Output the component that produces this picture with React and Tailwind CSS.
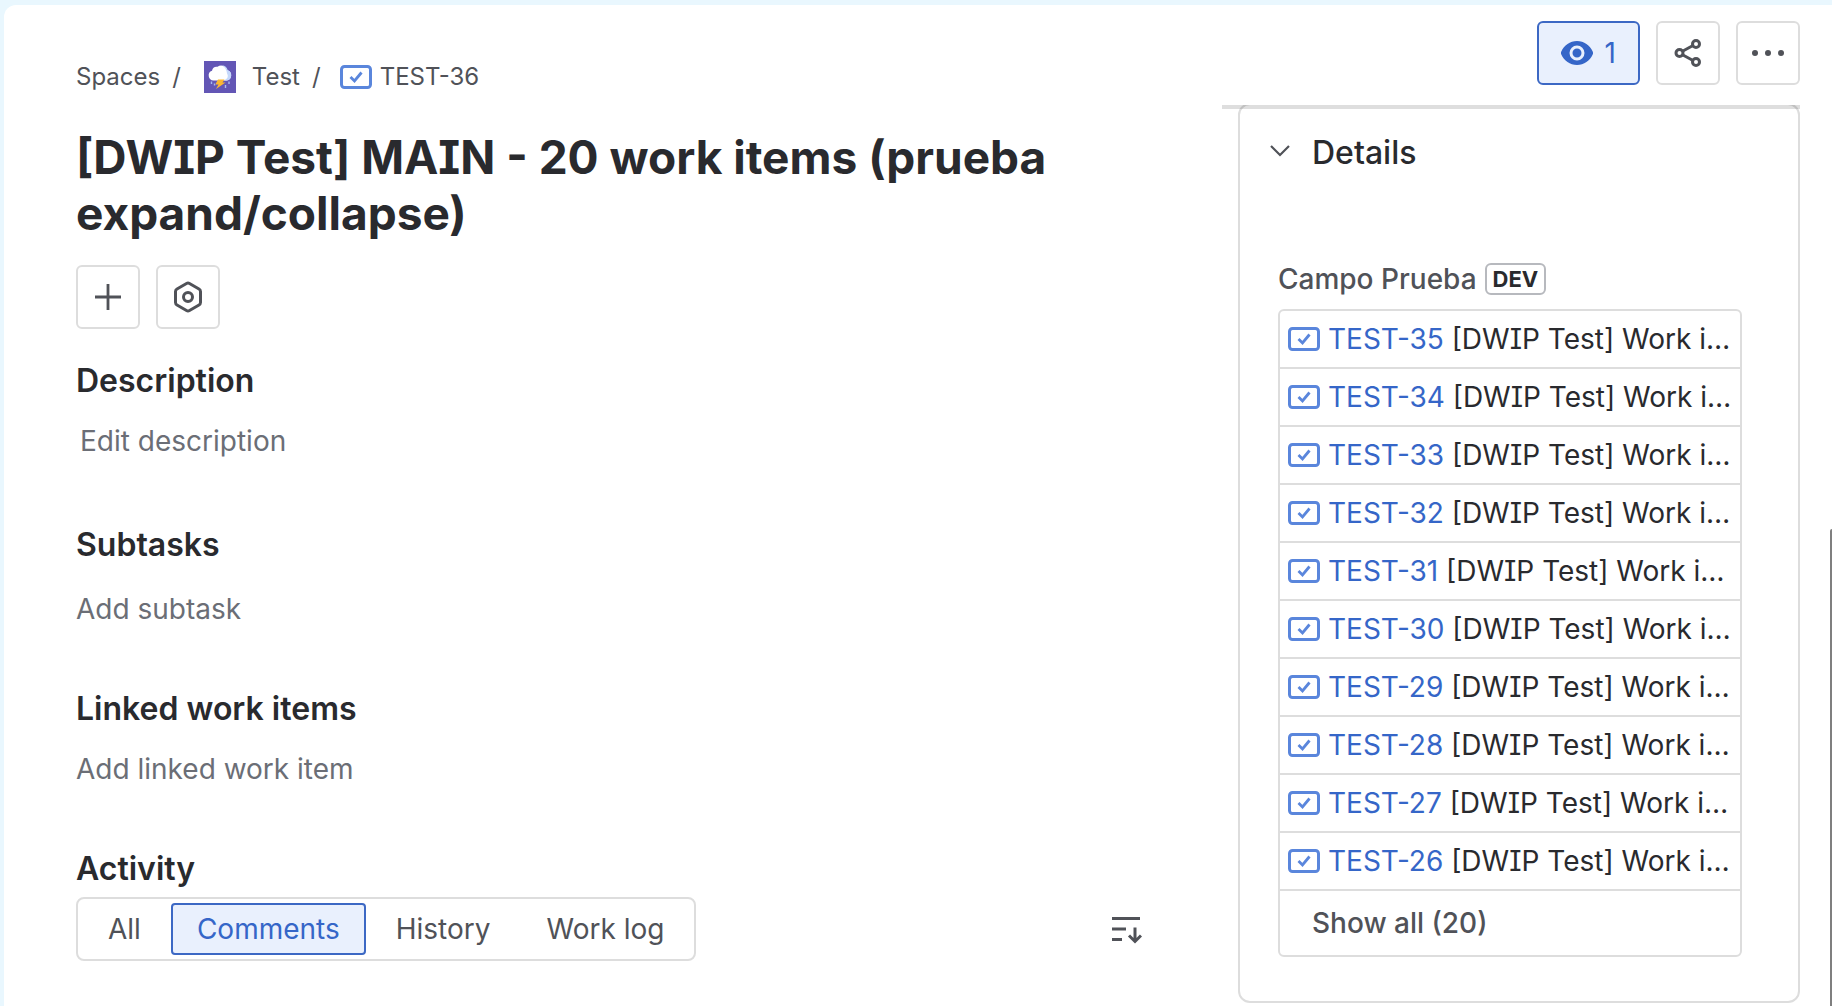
import React from "react";

const workItems = [35, 34, 33, 32, 31, 30, 29, 28, 27, 26].map((n) => ({
  key: `TEST-${n}`,
  summary: `[DWIP Test] Work item ${n}`,
}));

const tabs = ["All", "Comments", "History", "Work log"];

function TaskIcon() {
  return (
    <svg viewBox="0 0 32 32" className="w-8 h-8 shrink-0" fill="none" stroke="#5a86dc">
      <rect x="1.5" y="5.5" width="29" height="21" rx="3" strokeWidth="3" />
      <path d="M10.5 16l4 4L21.500 11.500" strokeWidth="2.8" />
    </svg>
  );
}

function StormIcon() {
  return (
    <svg viewBox="0 0 32 32" className="w-8 h-8 shrink-0">
      <rect width="32" height="32" fill="#6356b5" />
      <path
        d="M9.500 19.500a5 5 0 0 1-1.500-9.700a5 5 0 0 1 5.500-4a6.500 6.500 0 0 1 10 3.500a5.300 5.300 0 0 1-.5 10.200z"
        fill="#fff"
      />
      <path
        d="M18 4.300a6.500 6.500 0 0 1 5.700 5a5.300 5.300 0 0 1-.7 10.200h-4c4-.5 6-4 4-7c-.2-3.500-2-6.500-5-8.200z"
        fill="#c5d8fb"
      />
      <path d="M14 18.500h6.500l-2 3h3L12 28l2.500-4.500h-3.200z" fill="#fbb731" />
      <path d="M7.500 20.500v2.500M10.500 22.500v2M21.500 24v3M25 20.500v2.500" stroke="#a7b9ee" strokeWidth="1.400" />
    </svg>
  );
}

function IconButton({ label, children }) {
  return (
    <button
      aria-label={label}
      className="w-16 h-16 flex items-center justify-center rounded-md border-2 border-[#dddddd] text-[#505258]"
    >
      {children}
    </button>
  );
}

function Breadcrumbs() {
  return (
    <nav aria-label="Breadcrumbs" className="flex items-center h-8 text-2xl text-[#505258]">
      <a href="#spaces">Spaces</a>
      <span className="ml-3 mr-[23px]">/</span>
      <a href="#test" className="flex items-center gap-4">
        <StormIcon />
        Test
      </a>
      <span className="ml-3 mr-[19px]">/</span>
      <a href="#TEST-36" className="flex items-center gap-2">
        <TaskIcon />
        TEST-36
      </a>
    </nav>
  );
}

function Section({ title, action, className = "mt-5" }) {
  return (
    <section>
      <h2 className="text-[32px] leading-10 font-semibold text-[#292a2e]">{title}</h2>
      <button className={`block text-[28px] leading-10 text-[#6b6e76] ${className}`}>{action}</button>
    </section>
  );
}

function Activity() {
  return (
    <section>
      <h2 className="text-[32px] leading-10 font-semibold text-[#292a2e]">Activity</h2>
      <div className="mt-2 flex items-center justify-between">
        <div className="flex gap-1 h-16 p-1 rounded-lg border-2 border-[#dddddd] text-[28px] text-[#505258]">
          {tabs.map((tab) => (
            <button
              key={tab}
              className={
                tab === "Comments"
                  ? "px-6 rounded border-2 border-[#3c68c4] bg-[#e9f0fd] text-[#3566c8]"
                  : "px-6 rounded border-2 border-transparent"
              }
            >
              {tab}
            </button>
          ))}
        </div>
        <button aria-label="Sort comments" className="text-[#505258]">
          <svg viewBox="0 0 32 32" className="w-8 h-8" fill="none" stroke="currentColor" strokeWidth="3">
            <path d="M2 5.500h28M2 16h14M2 26.500h10" />
            <path d="M25 14.500v14M19 22.500l6 6l6-6" />
          </svg>
        </button>
      </div>
    </section>
  );
}

function Toolbar() {
  return (
    <div className="flex justify-end gap-4 pt-4 h-[100px]">
      <button
        aria-label="Watching"
        className="h-16 px-[22px] flex items-center gap-3 rounded-md border-2 border-[#3c68c4] bg-[#e9f0fd] text-[#3566c8] text-[28px]"
      >
        <svg viewBox="0 0 32 24" className="w-8 h-6" fill="currentColor">
          <path d="M16 0C9 0 3 4.500 .3 10.500a3.500 3.500 0 0 0 0 3C3 19.500 9 24 16 24s13-4.500 15.700-10.500a3.500 3.500 0 0 0 0-3C29 4.500 23 0 16 0z" />
          <circle cx="16" cy="12" r="6" fill="none" stroke="#e9f0fd" strokeWidth="3" />
        </svg>
        1
      </button>
      <IconButton label="Share">
        <svg viewBox="0 0 32 32" className="w-8 h-8" fill="none" stroke="currentColor" strokeWidth="3">
          <circle cx="7.500" cy="16" r="3.500" />
          <circle cx="24" cy="7" r="3.500" />
          <circle cx="24" cy="25" r="3.500" />
          <path d="M10.500 14.300l10.500-5.800M10.500 17.700l10.500 5.800" />
        </svg>
      </IconButton>
      <IconButton label="More actions">
        <svg viewBox="0 0 32 32" className="w-8 h-8" fill="currentColor">
          <circle cx="3" cy="16" r="3" />
          <circle cx="16" cy="16" r="3" />
          <circle cx="29" cy="16" r="3" />
        </svg>
      </IconButton>
    </div>
  );
}

function DetailsPanel() {
  return (
    <div className="-mt-0.5 ml-4 pl-[38px] pr-14 pt-7 pb-11 border-2 border-[#dddddd] rounded-xl">
      <button className="flex items-center gap-5 -ml-2.5 text-[32px] leading-10 font-medium text-[#292a2e]">
        <svg viewBox="0 0 24 24" className="w-6 h-6" fill="none" stroke="#505258" strokeWidth="2.200">
          <path d="M3 5l9 9l9-9" />
        </svg>
        Details
      </button>

      <div className="mt-[86px] flex items-center gap-2">
        <h3 className="text-[28px] leading-10 font-medium text-[#505258]">Campo Prueba</h3>
        <span className="px-1.5 h-8 flex items-center rounded-md border-2 border-[#b7b9be] text-[22px] font-bold text-[#292a2e]">
          DEV
        </span>
      </div>

      <div className="mt-2.5 border-2 border-[#dddddd] rounded-md text-[28px]">
        <ul>
          {workItems.map((item) => (
            <li key={item.key} className="h-[58px] px-2 flex items-center gap-2 border-b-2 border-[#dddddd]">
              <TaskIcon />
              <p className="truncate text-[#292a2e]">
                <a href={`#${item.key}`} className="text-[#3566c8]">
                  {item.key}
                </a>{" "}
                {item.summary}
              </p>
            </li>
          ))}
        </ul>
        <button className="h-16 px-8 font-medium text-[#505258]">Show all (20)</button>
      </div>
    </div>
  );
}

export default function App() {
  return (
    <div className="min-h-screen pt-[5px] pl-1 bg-[#e9f7fe] font-[Inter,sans-serif] [font-feature-settings:'cv08']">
      <div className="relative flex min-h-[calc(100vh-5px)] bg-white rounded-tl-xl">
        <main className="flex-1 min-w-0 pl-[72px] pr-20 pt-14">
          <Breadcrumbs />
          <h1 className="mt-9 text-[46px] leading-14 font-bold text-[#292a2e]">
            [DWIP Test] MAIN - 20 work items (prueba expand/collapse)
          </h1>
          <div className="mt-6 mb-8 flex gap-4">
            <IconButton label="Add">
              <svg viewBox="0 0 32 32" className="w-8 h-8" fill="none" stroke="currentColor" strokeWidth="2.800">
                <path d="M16 3v26M3 16h26" />
              </svg>
            </IconButton>
            <IconButton label="Apps">
              <svg viewBox="0 0 32 32" className="w-8 h-8" fill="none" stroke="currentColor" strokeWidth="3">
                <path d="M14.500 2.500a3 3 0 0 1 3 0l9.500 5.500a3 3 0 0 1 1.500 2.500v11a3 3 0 0 1-1.500 2.500l-9.500 5.500a3 3 0 0 1-3 0L5 24a3 3 0 0 1-1.500-2.500v-11A3 3 0 0 1 5 8z" />
                <circle cx="16" cy="16" r="4.500" />
              </svg>
            </IconButton>
          </div>
          <div className="mb-15 flex flex-col gap-16">
            <Section title="Description" action="Edit description" className="mt-5 ml-1" />
            <Section title="Subtasks" action="Add subtask" className="mt-6 -mb-1" />
            <Section title="Linked work items" action="Add linked work item" />
          </div>
          <Activity />
        </main>

        <aside className="w-[578px] shrink-0 mr-8">
          <Toolbar />
          {/* scroll shadow lies over the top edge of the panel */}
          <div className="relative h-1 -mb-1 bg-black/13" />
          <div className="overflow-hidden">
            <DetailsPanel />
          </div>
        </aside>

        <div className="absolute right-0 top-[524px] bottom-0 w-0.5 rounded-tl bg-[#7f7f7f]" />
      </div>
    </div>
  );
}
